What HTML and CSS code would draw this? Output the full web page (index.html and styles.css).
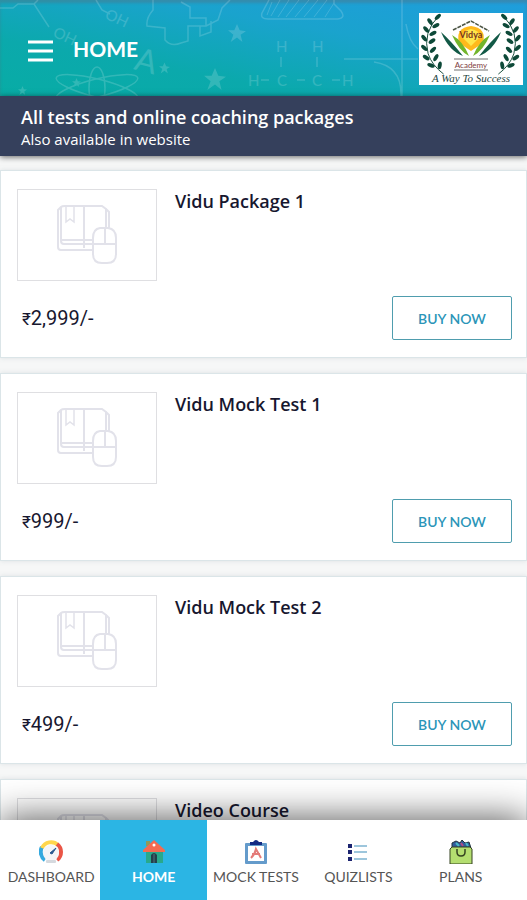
FILE: index.html
```html
<!DOCTYPE html>
<html lang="en">
<head>
    <meta charset="UTF-8">
    <meta name="viewport" content="width=device-width, initial-scale=1.0">
    <title>Vidya Academy</title>
    <link rel="stylesheet" href="styles.css">
</head>
<body>
    <!-- Shared shapes -->
    <svg class="shapes" aria-hidden="true">
        <symbol id="book" viewBox="0 0 62 62">
            <g fill="none" stroke="#e2e2ea" stroke-width="2">
                <path d="M5 3 2 6V43Q2 46 5 46H37M5 3V37Q5 40 8 40H37M5 3Q6 2 9 2H46L50 5V25M50 5 53 8V25M28 2V44M6 36H37"/>
                <path d="M10 2V18L14 15 18 18V2" stroke-width="1.5"/>
                <path d="M37 34Q37 25 44 24H52Q60 25 60 34V50Q60 59 51 59H46Q37 59 37 50ZM37 40H60M49 24V40" fill="#fff"/>
            </g>
        </symbol>
        <symbol id="star" viewBox="0 0 20 20">
            <path d="M10 0 13 7 20 8 14 12 16 20 10 15 3 20 6 12 0 7 7 7Z" fill="#fff"/>
        </symbol>
        <symbol id="laurel" viewBox="0 0 24 66">
            <path d="M19 3Q2 20 8 42Q12 54 24 63" fill="none" stroke="#174d3c" stroke-width="1"/>
            <g fill="#0d4938">
                <ellipse cx="18" cy="4" rx="4" ry="2" transform="rotate(-45 18 4)"/>
                <ellipse cx="10" cy="9" rx="4" ry="2" transform="rotate(55 10 9)"/>
                <ellipse cx="16" cy="13" rx="4" ry="2" transform="rotate(-30 16 13)"/>
                <ellipse cx="6" cy="17" rx="4" ry="2" transform="rotate(50 6 17)"/>
                <ellipse cx="13" cy="21" rx="4" ry="2" transform="rotate(-30 13 21)"/>
                <ellipse cx="4" cy="26" rx="4" ry="2" transform="rotate(50 4 26)"/>
                <ellipse cx="12" cy="29" rx="4" ry="2" transform="rotate(-35 12 29)"/>
                <ellipse cx="4" cy="36" rx="4" ry="2" transform="rotate(45 4 36)"/>
                <ellipse cx="13" cy="38" rx="4" ry="2" transform="rotate(-45 13 38)"/>
                <ellipse cx="6" cy="46" rx="4" ry="2" transform="rotate(35 6 46)"/>
                <ellipse cx="16" cy="46" rx="4" ry="2" transform="rotate(-60 16 46)"/>
                <ellipse cx="11" cy="54" rx="4" ry="2" transform="rotate(20 11 54)"/>
                <ellipse cx="20" cy="54" rx="4" ry="2" transform="rotate(-80 20 54)"/>
            </g>
        </symbol>
    </svg>

    <header class="topbar">
        <svg class="doodles" viewBox="0 0 527 96" preserveAspectRatio="xMinYMin slice" aria-hidden="true">
            <g fill="none" stroke="#fff" stroke-width="1.5">
                <path d="M0 8H13L18 4H34L49 27M34 4 38 0M96 0 102 10 110 14"/>
                <path d="M153 0V10Q146 18 147 26L165 28V40Q171 47 181 43L188 41V26H206V18H190V7L181 2M206 26 218 20 222 8 230 0M200 26V36L211 32V21"/>
                <path d="M269 0 262 13Q260 19 268 19H338Q346 18 341 11L334 4V0"/>
                <path d="M272 2 267 15M280 0 271 16M289 0 278 17M299 0 286 17M309 0 295 17M318 0 304 17M327 0 314 17M334 3 325 17" stroke-width="1"/>
                <path d="M402 0V96M344 59H418M374 62Q402 66 401 96M406 24Q409 42 418 49"/>
                <path d="M281 57V67M317 57V67M261 80H269M297 80H305M332 80H340"/>
                <ellipse cx="97" cy="88" rx="8" ry="21"/>
                <ellipse cx="97" cy="88" rx="42" ry="9" transform="rotate(14 97 88)"/>
                <ellipse cx="97" cy="88" rx="42" ry="9" transform="rotate(-14 97 88)"/>
            </g>
            <g class="doodle-text">
                <text x="104" y="18" transform="rotate(25 104 18)">OH</text>
                <text x="52" y="36" transform="rotate(25 52 36)">OH</text>
                <text x="133" y="69" class="doodle-big" transform="rotate(15 133 69)">A</text>
                <text x="276" y="52">H</text>
                <text x="312" y="52">H</text>
                <text x="248" y="86">H</text>
                <text x="277" y="86">C</text>
                <text x="312" y="86">C</text>
                <text x="342" y="86">H</text>
            </g>
            <use href="#star" x="228" y="24" width="18" height="18"/>
            <use href="#star" x="204" y="67" width="22" height="24"/>
            <use href="#star" x="159" y="62" width="11" height="12"/>
            <use href="#star" x="72" y="78" width="9" height="9"/>
            <use href="#star" x="18" y="86" width="9" height="9"/>
        </svg>
        <button class="menu" type="button" aria-label="Menu">
            <svg width="25" height="22" viewBox="0 0 25 22"><path d="M0 2H25M0 11H25M0 20H25" stroke="#fff" stroke-width="3"/></svg>
        </button>
        <h1>HOME</h1>
        <svg class="logo" width="104" height="72" viewBox="0 0 104 72" role="img" aria-label="Vidya Academy">
            <rect width="104" height="72" fill="#fff"/>
            <use href="#laurel" x="1" y="0" width="24" height="64"/>
            <use href="#laurel" x="1" y="0" width="24" height="64" transform="translate(104 0) scale(-1 1)"/>
            <path d="M34 17 52 8 70 18" fill="none" stroke="#4c5544" stroke-width="1.5" stroke-dasharray="4 1"/>
            <path d="M40 30Q36 15 52 13Q68 15 64 30L52 38Z" fill="#ffb91c"/>
            <path d="M43 24Q44 17 52 16Q60 17 61 24L52 33Z" fill="#ffe64b"/>
            <path d="M33 22Q44 28 50 43Q40 38 33 22ZM71 22Q60 28 54 43Q64 38 71 22Z" fill="#72b52b"/>
            <path d="M22 19Q33 29 44 43Q30 38 22 19ZM82 19Q71 29 60 43Q74 38 82 19Z" fill="#125946"/>
            <text x="52" y="25" class="logo-name">Vidya</text>
            <path d="M35 46H69M35 57H69" stroke="#717171" stroke-width="1"/>
            <text x="52" y="55" class="logo-academy">Academy</text>
            <text x="52" y="69" class="logo-motto">A Way To Success</text>
        </svg>
    </header>

    <section class="banner">
        <h2>All tests and online coaching packages</h2>
        <p>Also available in website</p>
    </section>

    <main class="packages">
        <article class="card">
            <div class="thumb"><svg><use href="#book"/></svg></div>
            <h3>Vidu Package 1</h3>
            <p class="price"><span>₹</span>2,999/-</p>
            <button class="buy" type="button">BUY NOW</button>
        </article>
        <article class="card">
            <div class="thumb"><svg><use href="#book"/></svg></div>
            <h3>Vidu Mock Test 1</h3>
            <p class="price"><span>₹</span>999/-</p>
            <button class="buy" type="button">BUY NOW</button>
        </article>
        <article class="card">
            <div class="thumb"><svg><use href="#book"/></svg></div>
            <h3>Vidu Mock Test 2</h3>
            <p class="price"><span>₹</span>499/-</p>
            <button class="buy" type="button">BUY NOW</button>
        </article>
        <article class="card">
            <div class="thumb"><svg><use href="#book"/></svg></div>
            <h3>Video Course</h3>
        </article>
    </main>

    <nav class="tabs">
        <a href="#dashboard">
            <svg viewBox="0 0 24 24">
                <path d="M6 20A10 10 0 0 1 3 7" fill="none" stroke="#34a9df" stroke-width="4"/>
                <path d="M3 8A10 10 0 0 1 19 5" fill="none" stroke="#ffd64c" stroke-width="4"/>
                <path d="M18 4A10 10 0 0 1 18 20" fill="none" stroke="#ea5546" stroke-width="4"/>
                <circle cx="12" cy="13" r="8" fill="#f4f5f7"/>
                <path d="M11 13 17 8 13 14Z" fill="#27588f" stroke="#27588f"/>
                <rect x="7" y="20" width="10" height="3" rx="1" fill="#d5d9de"/>
            </svg>
            DASHBOARD
        </a>
        <a href="#home" class="active">
            <svg viewBox="0 0 24 24">
                <path d="M4 1H8V6H4Z" fill="#8d9a5b"/>
                <path d="M4 11H21V23H4Z" fill="#28a98b"/>
                <path d="M12 0 23 10V12H1V10Z" fill="#f36b51"/>
                <path d="M9 23V15Q12 11 15 15V23Z" fill="#24404b"/>
                <circle cx="12" cy="5" r="1.5" fill="#fff"/>
                <path d="M12 14V23" stroke="#4c7580"/>
            </svg>
            HOME
        </a>
        <a href="#mock-tests">
            <svg viewBox="0 0 24 24">
                <rect x="1" y="3" width="22" height="21" rx="1" fill="#649bcb"/>
                <path d="M4 6H20V21H4Z" fill="#fff"/>
                <path d="M6 5V2H9Q12-2 15 2H18V5Z" fill="#132a83"/>
                <path d="M7 18Q11 14 12 9L17 18M8 14H16" fill="none" stroke="#e47b79" stroke-width="2"/>
            </svg>
            MOCK TESTS
        </a>
        <a href="#quizlists">
            <svg viewBox="0 0 24 24">
                <path d="M2 4H6V8H2ZM2 10H6V14H2ZM2 17H6V21H2Z" fill="#1c2470"/>
                <path d="M8 6H21M8 12H21M8 19H21" stroke="#9dc6dc" stroke-width="2"/>
            </svg>
            QUIZLISTS
        </a>
        <a href="#plans">
            <svg viewBox="0 0 24 24">
                <path d="M3 8V3L7 1 11 3 13 0 16 3 20 2 22 8Z" fill="#315b9c" stroke="#22343d"/>
                <path d="M7 3 10 6M17 3 19 6" stroke="#4abac5" stroke-width="2"/>
                <path d="M12 3 14 6" stroke="#b44a83" stroke-width="2"/>
                <path d="M3 7H21L23 9V24H1V9Z" fill="#b4de70" stroke="#354321" stroke-width="1"/>
                <path d="M8 9V12Q8 16 12 16T16 12V9" fill="none" stroke="#354321" stroke-width="1.5"/>
            </svg>
            PLANS
        </a>
    </nav>
</body>
</html>
```
FILE: styles.css
```css
* {
    box-sizing: border-box;
}
body {
    display: flex;
    flex-direction: column;
    height: 100vh;
    margin: 0;
    background: #f6f7f7;
    color: #17172f;
    font-family: Lato, "Open Sans", sans-serif;
}
h1, h2, h3, p {
    margin: 0;
}
button {
    font-family: inherit;
    cursor: pointer;
}
.shapes {
    position: absolute;
    width: 0;
    height: 0;
}

/* Header */
.topbar {
    position: relative;
    display: flex;
    flex: none;
    align-items: center;
    height: 96px;
    padding: 2px 4px 0 28px;
    background: linear-gradient(10deg, #08aca5 0%, #0ba9ac 30%, #1aa3cd 65%, #1f9ddd 100%);
    box-shadow: inset 0 3px 3px rgba(90, 110, 120, 0.4);
    color: #fff;
}
.doodles {
    position: absolute;
    top: 0;
    left: 0;
    width: 100%;
    height: 100%;
    opacity: 0.16;
}
.doodle-text {
    fill: #fff;
    font-size: 15px;
}
.doodle-big {
    font-size: 32px;
}
.menu {
    display: flex;
    margin-top: 4px;
    padding: 0;
    border: none;
    background: none;
}
.topbar h1 {
    position: relative;
    margin-left: 20px;
    font-size: 21px;
    line-height: 28px;
}
.menu, .logo {
    position: relative;
}
.logo {
    margin-left: auto;
}
.logo text {
    text-anchor: middle;
}
.logo-name {
    fill: #78351e;
    font-size: 9px;
    font-weight: bold;
}
.logo-academy {
    fill: #804040;
    font-size: 8px;
}
.logo-motto {
    fill: #24463f;
    font-family: "Liberation Serif", serif;
    font-size: 11px;
    font-style: italic;
}

.banner {
    position: relative;
    z-index: 1;
    flex: none;
    padding: 8px 21px;
    background: #35405c;
    box-shadow: 0 1px 6px rgba(0, 0, 0, 0.6);
    color: #fff;
    font-family: "Open Sans", sans-serif;
}
.banner h2 {
    font-size: 18px;
    font-weight: 600;
    line-height: 26px;
}
.banner p {
    font-size: 15px;
    line-height: 18px;
}

/* Package list */
.packages {
    flex: 1;
    min-height: 0;
    padding-top: 14px;
    overflow-y: auto;
    scrollbar-width: none;
}
.card {
    display: grid;
    grid-template-columns: 140px 1fr auto;
    grid-template-rows: 92px 44px;
    row-gap: 15px;
    height: 188px;
    margin-bottom: 15px;
    padding: 18px 14px 18px 16px;
    border: 1px solid #dbe5e8;
    background: #fff;
    box-shadow: 0 0 5px rgba(80, 110, 120, 0.15);
}
.thumb {
    display: flex;
    justify-content: center;
    padding-top: 14px;
    border: 1px solid #dfdfe2;
}
.thumb svg {
    width: 62px;
    height: 62px;
}
.card h3 {
    grid-column: 2 / 4;
    padding-left: 18px;
    font-family: "Open Sans", sans-serif;
    font-size: 18px;
    font-weight: 600;
    line-height: 24px;
}
.price {
    grid-column: 1 / 3;
    padding-left: 5px;
    font-family: Roboto, sans-serif;
    font-size: 20px;
    line-height: 44px;
}
.price span {
    font-size: 17px;
}
.buy {
    width: 120px;
    border: 1px solid #4f9dae;
    border-radius: 2px;
    background: #fff;
    color: #2b95b8;
    font-size: 14px;
    font-weight: 600;
}

/* Bottom tabs */
.tabs {
    position: relative;
    z-index: 1;
    display: grid;
    flex: none;
    grid-template-columns: repeat(5, 1fr);
    height: 80px;
    padding-right: 15px;
    background: #fff;
    box-shadow: 0 -2px 36px rgba(0, 0, 0, 0.65);
}
.tabs a {
    display: flex;
    flex-direction: column;
    align-items: center;
    gap: 3px;
    padding-top: 20px;
    color: #555;
    font-size: 14px;
    line-height: 20px;
    text-decoration: none;
    white-space: nowrap;
}
.tabs svg {
    width: 24px;
    height: 24px;
}
.tabs .active {
    margin: 0 -2px;
    background: #2bb5e4;
    color: #fff;
    font-weight: bold;
}
```
